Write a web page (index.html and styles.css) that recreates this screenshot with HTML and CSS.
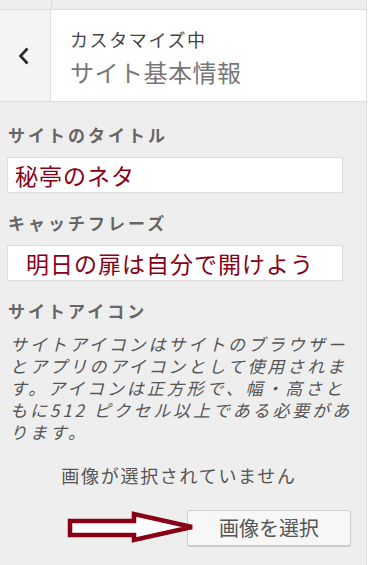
FILE: index.html
```html
<!DOCTYPE html>
<html lang="ja">
<head>
<meta charset="utf-8">
<link rel="stylesheet" href="styles.css">
</head>
<body>
<div class="panel">
  <div class="topbar"><div class="topbar-left"></div></div>
  <div class="header">
    <div class="back">
      <svg width="14" height="20" viewBox="0 0 14 20"><polyline points="10.5,2.5 3.5,10 10.5,17.5" fill="none" stroke="#23282d" stroke-width="2.6"/></svg>
    </div>
    <div class="titles">
      <div class="sub">カスタマイズ中</div>
      <div class="main">サイト基本情報</div>
    </div>
  </div>
  <div class="content">
    <div class="label">サイトのタイトル</div>
    <div class="input">秘亭のネタ</div>
    <div class="label">キャッチフレーズ</div>
    <div class="input input-indent">明日の扉は自分で開けよう</div>
    <div class="label">サイトアイコン</div>
    <p class="desc">サイトアイコンはサイトのブラウザー<br>とアプリのアイコンとして使用されま<br>す。アイコンは正方形で、幅・高さと<br>もに512 ピクセル以上である必要があ<br>ります。</p>
    <div class="noimage">画像が選択されていません</div>
    <div class="button-row">
      <svg class="arrow" width="132" height="34" viewBox="0 0 132 34"><polygon points="3,11 67,11 67,4 125,17 67,30 67,25 3,25" fill="#fff" stroke="#880015" stroke-width="4.5" stroke-linejoin="miter"/></svg>
      <div class="button">画像を選択</div>
    </div>
  </div>
</div>
</body>
</html>
```
FILE: styles.css
```css
html, body {
  margin: 0;
  padding: 0;
  background: #fff;
  overflow: hidden;
}
body {
  font-family: "Noto Sans CJK JP", "Noto Sans", sans-serif;
  color: #555;
}
.panel {
  width: 366px;
  min-height: 565px;
  background: #eee;
  border-right: 1px solid #ddd;
}
.topbar {
  height: 9px;
  border-bottom: 1px solid #ddd;
  background: #eee;
}
.topbar-left {
  width: 51px;
  height: 9px;
  border-right: 1px solid #ddd;
}
.header {
  display: flex;
  height: 91px;
  background: #fff;
  border-bottom: 1px solid #ddd;
}
.back {
  width: 51px;
  flex: none;
  border-right: 1px solid #ddd;
  background: #f4f4f4;
  display: flex;
  align-items: center;
  justify-content: center;
  padding-right: 3px;
  box-sizing: border-box;
}
.back svg {
  margin-top: 1px;
}
.titles {
  padding: 17px 0 0 19px;
}
.sub {
  font-size: 18px;
  line-height: 24px;
  letter-spacing: 1.6px;
  color: #444;
}
.main {
  margin-top: 6px;
  font-size: 24px;
  line-height: 30px;
  color: #777;
  letter-spacing: 0.5px;
}
.content {
  padding: 21px 15px 0 7px;
}
.label {
  font-size: 17px;
  line-height: 24px;
  font-weight: bold;
  letter-spacing: 3px;
  color: #666;
  padding-left: 1px;
  margin-bottom: 10px;
}
.input {
  width: 336px;
  height: 36px;
  box-sizing: border-box;
  background: #fff;
  border: 1px solid #ddd;
  padding-left: 7px;
  font-size: 23px;
  line-height: 34px;
  letter-spacing: 1px;
  color: #880015;
  margin-bottom: 18px;
}
.input-indent {
  padding-left: 18px;
}
.desc {
  margin: 10px 0 0 0;
  padding-left: 3px;
  font-size: 17px;
  line-height: 22px;
  letter-spacing: 2.9px;
  font-style: italic;
  white-space: nowrap;
  color: #555;
}
.noimage {
  margin-top: 20px;
  text-align: center;
  font-size: 18px;
  line-height: 24px;
  letter-spacing: 1.7px;
  color: #555;
}
.button-row {
  position: relative;
  display: flex;
  justify-content: flex-end;
  margin-top: 23px;
}
.button {
  width: 164px;
  height: 36px;
  box-sizing: border-box;
  background: #f7f7f7;
  border: 1px solid #ccc;
  border-radius: 3px;
  box-shadow: 0 1px 0 #ccc;
  text-align: center;
  font-size: 20px;
  line-height: 33px;
  color: #555;
}
.arrow {
  position: absolute;
  left: 60px;
  top: 0;
}
```
